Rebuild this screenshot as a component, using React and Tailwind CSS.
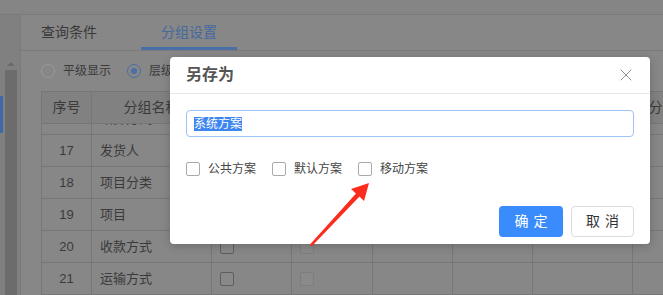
import React from 'react';
import { X } from 'lucide-react';

const rows = [
  { no: 16, name: '结算方式' },
  { no: 17, name: '发货人' },
  { no: 18, name: '项目分类' },
  { no: 19, name: '项目' },
  { no: 20, name: '收款方式' },
  { no: 21, name: '运输方式' },
];

const cols = 'grid grid-cols-[50px_120px_80px_81px_80px_80px_100px_88px]';
const cell = 'border-r border-b border-[#767676] flex items-center';

const Box = ({ dim }) => (
  <span
    className={
      dim
        ? 'w-[14px] h-[14px] rounded-[2px] border border-[#7d7d7d] bg-[#8a8a8a]'
        : 'w-[14px] h-[14px] rounded-[2px] border border-[#5e5e5e] bg-[#888888]'
    }
  />
);

const Check = ({ label }) => (
  <label className="flex items-center gap-[8px]">
    <span className="w-[14px] h-[14px] rounded-[2px] border border-[#a9a9a9] bg-white" />
    <span className="text-[12px] text-[#444]">{label}</span>
  </label>
);

export default function App() {
  return (
    <div
      className="relative w-[663px] h-[295px] overflow-hidden bg-[#878787] text-[#3a3a3a]"
      style={{ fontFamily: '"Liberation Sans", "Noto Sans CJK SC", sans-serif' }}
    >
      {/* page behind the mask */}
      <div className="h-[15px] bg-[#858585] border-b border-[#7b7b7b]" />
      <div className="flex h-[280px]">
        <div className="w-[21px] flex bg-[#808080] border-r border-[#7a7a7a]">
          <div className="w-[3px] mt-[81px] h-[37px] bg-[#3f68a8]" />
          <div className="ml-[2px] w-[12px] mt-[40px] flex flex-col items-center">
            <div className="w-0 h-0 border-l-[4px] border-r-[4px] border-b-[4px] border-l-transparent border-r-transparent border-b-[#6a6a6a] mt-[7px]" />
            <div className="mt-[4px] w-[12px] flex-1 bg-[#6c6c6c]" />
          </div>
        </div>
        <div className="flex-1 flex flex-col min-w-0">
          <div className="h-[36px] flex gap-[24px] border-b border-[#7a7a7a] shrink-0">
            <div className="w-[96px] flex items-center justify-center text-[14px]">查询条件</div>
            <div className="w-[96px] flex items-center justify-center text-[14px] text-[#45689f] border-b-[3px] border-[#4a6ea6] pt-[3px]">
              分组设置
            </div>
          </div>
          <div className="pl-[20px] h-[40px] flex items-center text-[12px] shrink-0">
            <span className="w-[14px] h-[14px] rounded-full border border-[#9a9a9a]" />
            <span className="ml-[8px]">平级显示</span>
            <span className="ml-[16px] w-[14px] h-[14px] rounded-full border border-[#4a6ea6] flex items-center justify-center">
              <span className="w-[6px] h-[6px] rounded-full bg-[#4a6ea6]" />
            </span>
            <span className="ml-[8px]">层级显示</span>
          </div>
          <div className="ml-[20px] border-l border-t border-[#767676] w-[700px]">
            <div className={`${cols} h-[32px] bg-[#818181] text-[14px]`}>
              <div className={`${cell} justify-center`}>序号</div>
              <div className={`${cell} justify-center`}>分组名称</div>
              <div className={`${cell} justify-center`}>汇总</div>
              <div className={`${cell} justify-center`}>显示</div>
              <div className={`${cell} justify-center`}>合计</div>
              <div className={`${cell} justify-center`}>小计</div>
              <div className={`${cell} justify-center`}>排序方式</div>
              <div className={`${cell} justify-center`}>分组顺序</div>
            </div>
            <div className="h-[171px] overflow-hidden">
              {rows.map((r, i) => (
                <div key={r.no} className={`${cols} h-[32px] text-[13px] ${i === 0 ? '-mt-[21px]' : ''}`}>
                  <div className={`${cell} justify-center`}>{r.no}</div>
                  <div className={`${cell} pl-[8px]`}>{r.name}</div>
                  <div className={`${cell} pl-[8px]`}><Box /></div>
                  <div className={`${cell} pl-[8px]`}><Box dim /></div>
                  <div className={cell} />
                  <div className={cell} />
                  <div className={cell} />
                  <div className={cell} />
                </div>
              ))}
            </div>
          </div>
        </div>
      </div>

      {/* dialog */}
      <div className="absolute left-[170px] top-[57px] w-[480px] h-[187px] bg-white rounded-[4px] shadow-[0_2px_10px_rgba(0,0,0,0.2)] flex flex-col">
        <div className="h-[37px] flex items-center justify-between pl-[16px] pr-[14px] border-b border-[#e8e8e8]">
          <span className="text-[16px] text-[#555] font-bold">另存为</span>
          <X size={20} strokeWidth={1.1} className="text-[#8a8a8a]" />
        </div>
        <div className="px-[16px] pt-[16px]">
          <div className="h-[27px] rounded-[4px] border border-[#9dc3f7] flex items-center px-[7px]">
            <span className="text-[12px] leading-[14px] bg-[#3d86ef] text-white">系统方案</span>
          </div>
          <div className="mt-[23px] flex items-center gap-[16px]">
            <Check label="公共方案" />
            <Check label="默认方案" />
            <Check label="移动方案" />
          </div>
          <div className="mt-[28px] flex justify-end gap-[8px]">
            <button className="w-[64px] h-[31px] rounded-[4px] bg-[#3a8bfb] text-white text-[14px] tracking-[5px] pl-[5px]">
              确定
            </button>
            <button className="w-[63px] h-[31px] rounded-[4px] border border-[#dcdcdc] bg-white text-[#333] text-[14px] tracking-[5px] pl-[5px]">
              取消
            </button>
          </div>
        </div>
      </div>

      {/* red arrow */}
      <svg className="absolute left-0 top-0" width="663" height="295" viewBox="0 0 663 295">
        <polygon
          points="369,183 364,201 359.5,196.5 312,246 309.5,245 356,193.5 351,189"
          fill="#fb2b1d"
        />
      </svg>
    </div>
  );
}
